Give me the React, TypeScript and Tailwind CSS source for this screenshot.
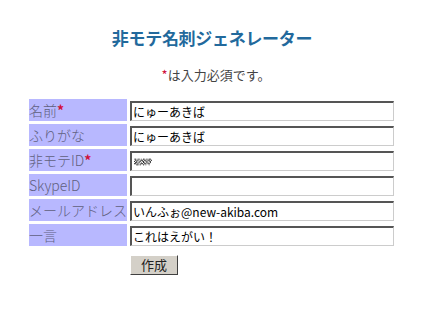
const rows: { label: string; required?: boolean; value: string; masked?: boolean }[] = [
  { label: "名前", required: true, value: "にゅーあきば" },
  { label: "ふりがな", value: "にゅーあきば" },
  { label: "非モテID", required: true, value: "", masked: true },
  { label: "SkypeID", value: "" },
  { label: "メールアドレス", value: "いんふぉ@new-akiba.com" },
  { label: "一言", value: "これはえがい！" },
];

function Mosaic() {
  // pixelated censor blob
  const cells = [
    "1101101011010110",
    "0111011101101101",
    "1010110110110110",
    "0110101011011010",
    "1101011101101100",
    "0011010010100100",
  ];
  return (
    <svg width="18" height="10" viewBox="0 0 16 6" className="ml-[1px]">
      {cells.map((row, y) =>
        row.split("").map((c, x) =>
          c === "1" ? <rect key={`${x}-${y}`} x={x} y={y} width="1" height="1" fill={(x + y) % 3 === 0 ? "#888" : "#333"} /> : null
        )
      )}
    </svg>
  );
}

export default function App() {
  return (
    <div className="w-[441px] h-[313px] bg-white overflow-hidden" style={{ fontFamily: '"Noto Sans CJK JP", "Noto Sans", sans-serif' }}>
      <div className="w-[424px] flex flex-col items-center">
        <h1 className="mt-[27px] h-[21px] leading-[21px] text-[17px] font-bold text-[#22699c] tracking-[-0.3px]">
          非モテ名刺ジェネレーター
        </h1>
        <p className="mt-[18px] ml-[8px] h-[18px] leading-[18px] text-[13px] text-[#444]">
          <span className="text-[#d0103a]">*</span>は入力必須です。
        </p>
        <div className="mt-[15px] w-[366px] flex flex-col gap-[3px]">
          {rows.map((r) => (
            <div key={r.label} className="flex h-[22px] gap-[3px]">
              <div className="w-[98px] shrink-0 bg-[#b8b8ff] text-[#606080] text-[14px] font-light leading-[23px] whitespace-nowrap overflow-hidden">
                {r.label}
                {r.required && <span className="text-[#d0103a] font-bold">*</span>}
              </div>
              <div className="flex-1 pt-[2px] pr-[1px]">
                <div className="h-[20px] w-[264px] bg-white border-t-2 border-l-2 border-r border-b border-t-[#555] border-l-[#555] border-r-[#ccc] border-b-[#ccc] text-[12px] leading-[17px] text-black pl-[1px] flex items-center whitespace-nowrap">
                  {r.masked ? <Mosaic /> : r.value}
                </div>
              </div>
            </div>
          ))}
          <div className="flex mt-[6px]">
            <div className="w-[101px] shrink-0" />
            <button className="w-[48px] h-[20px] bg-[#d4d0c8] border border-t-white border-l-white border-r-[#404040] border-b-[#404040] text-[13px] leading-[18px] text-[#222]">
              作成
            </button>
          </div>
        </div>
      </div>
    </div>
  );
}
